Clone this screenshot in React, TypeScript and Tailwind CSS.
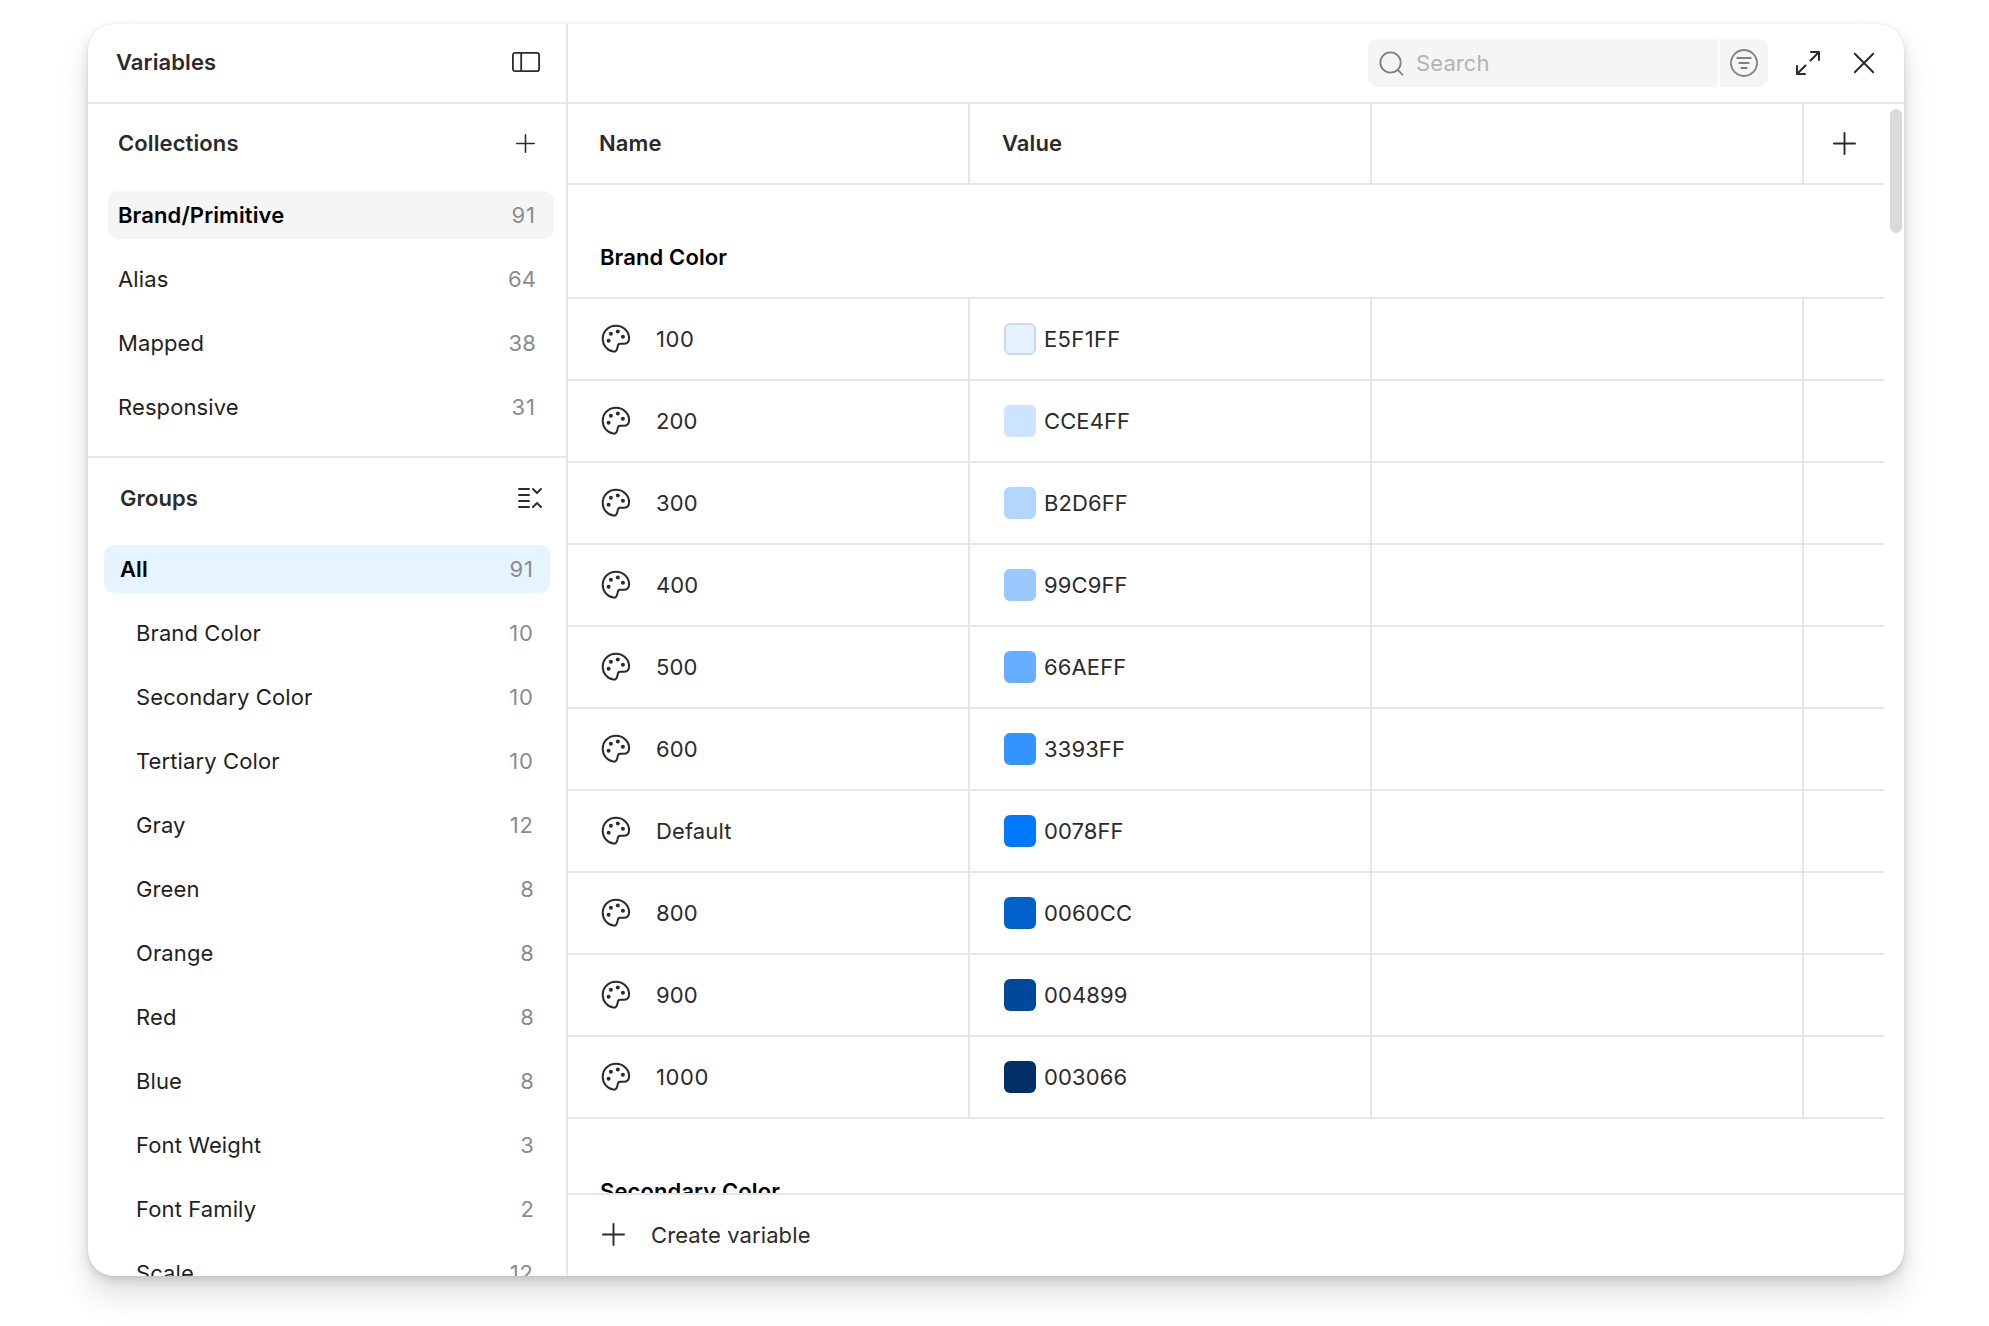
import { useState } from 'react';

interface CountItem {
    label: string;
    count: number;
}

interface ColorVariable {
    name: string;
    hex: string;
}

const collections: CountItem[] = [
    { label: 'Brand/Primitive', count: 91 },
    { label: 'Alias', count: 64 },
    { label: 'Mapped', count: 38 },
    { label: 'Responsive', count: 31 },
];

const groups: CountItem[] = [
    { label: 'All', count: 91 },
    { label: 'Brand Color', count: 10 },
    { label: 'Secondary Color', count: 10 },
    { label: 'Tertiary Color', count: 10 },
    { label: 'Gray', count: 12 },
    { label: 'Green', count: 8 },
    { label: 'Orange', count: 8 },
    { label: 'Red', count: 8 },
    { label: 'Blue', count: 8 },
    { label: 'Font Weight', count: 3 },
    { label: 'Font Family', count: 2 },
    { label: 'Scale', count: 12 },
];

const brandColors: ColorVariable[] = [
    { name: '100', hex: 'E5F1FF' },
    { name: '200', hex: 'CCE4FF' },
    { name: '300', hex: 'B2D6FF' },
    { name: '400', hex: '99C9FF' },
    { name: '500', hex: '66AEFF' },
    { name: '600', hex: '3393FF' },
    { name: 'Default', hex: '0078FF' },
    { name: '800', hex: '0060CC' },
    { name: '900', hex: '004899' },
    { name: '1000', hex: '003066' },
];

function PlusIcon({ size }: { size: number }) {
    return (
        <svg width={size} height={size} viewBox="0 0 24 24" fill="none" stroke="currentColor" strokeWidth="2" strokeLinecap="round">
            <path d="M12 1v22M1 12h22" />
        </svg>
    );
}

function SidebarIcon() {
    return (
        <svg width="28" height="20" viewBox="0 0 28 20" fill="none" stroke="currentColor" strokeWidth="1.8">
            <rect x="0.9" y="0.9" width="26.2" height="18.2" rx="2.2" />
            <path d="M9.2 1v18" />
        </svg>
    );
}

function CollapseIcon() {
    return (
        <svg width="24" height="22" viewBox="0 0 24 22" fill="none" stroke="currentColor" strokeWidth="1.9" strokeLinecap="round" strokeLinejoin="round">
            <path d="M1 2h10M1 8h10M1 14h10M1 20h10" />
            <path d="M15 2l4 4 4-4M15 20l4-4 4 4" />
        </svg>
    );
}

function PaletteIcon() {
    return (
        <svg width="30" height="30" viewBox="0 0 30 30" fill="none" stroke="currentColor" strokeWidth="2" strokeLinejoin="round">
            <path d="M12.5 27.6C5.8 26.4 1.7 21 1.7 14.8 1.7 7.4 7.6 1.8 15 1.8c7.4 0 13.1 5.6 13.1 12.4 0 3.6-2.4 5.6-5.6 5.6h-3.3c-1.7 0-2.3 1-2.5 2.6-.5 3.4-1.6 5.6-4.2 5.2z" />
            <g fill="currentColor" stroke="none">
                <circle cx="7.6" cy="16.7" r="2" />
                <circle cx="9.9" cy="9.8" r="2" />
                <circle cx="16.8" cy="7.6" r="2" />
                <circle cx="21.9" cy="12.8" r="2" />
            </g>
        </svg>
    );
}

function SearchIcon() {
    return (
        <svg width="25" height="25" viewBox="0 0 25 25" fill="none" stroke="currentColor" strokeWidth="1.8" strokeLinecap="round">
            <circle cx="11.5" cy="11.5" r="10.2" />
            <path d="M18.8 18.8l4.7 4.9" />
        </svg>
    );
}

function FilterIcon() {
    return (
        <svg width="28" height="28" viewBox="0 0 28 28" fill="none" stroke="currentColor" strokeWidth="1.8" strokeLinecap="round">
            <circle cx="14" cy="14" r="13" />
            <path d="M7.2 9h13.6M9.2 14h9.6M11.2 19h5.6" />
        </svg>
    );
}

function ExpandIcon() {
    return (
        <svg width="26" height="26" viewBox="0 0 26 26" fill="none" stroke="currentColor" strokeWidth="2" strokeLinecap="round" strokeLinejoin="round">
            <path d="M16 2h8v8M24 2l-8.5 8.5" />
            <path d="M10 24H2v-8M2 24l8.5-8.5" />
        </svg>
    );
}

function CloseIcon() {
    return (
        <svg width="22" height="22" viewBox="0 0 22 22" fill="none" stroke="currentColor" strokeWidth="2" strokeLinecap="round">
            <path d="M1.8 1.8l18.4 18.4M20.2 1.8L1.8 20.2" />
        </svg>
    );
}

function Count({ value }: { value: number }) {
    return (
        <span className={`font-normal text-[#8c8c8c] ${String(value).includes('1') ? 'tracking-[1px]' : ''}`}>{value}</span>
    );
}

export default function App() {
    const [collection, setCollection] = useState('Brand/Primitive');
    const [group, setGroup] = useState('All');

    return (
        <div className="w-full h-[1326px] bg-white pt-6 pl-[88px] overflow-hidden font-['Inter',sans-serif] text-[22px] leading-8 tracking-[0.11px] text-[#2b2b2b]">
            <div className="flex w-[1816px] h-[1252px] bg-white rounded-[26px] overflow-hidden shadow-[0_20px_32px_rgba(0,0,0,0.12),0_4px_10px_rgba(0,0,0,0.15),0_0_1px_rgba(0,0,0,0.12)]">
                {/* Sidebar */}
                <aside className="w-[480px] shrink-0 border-r-2 border-[#e6e6e6]">
                    <div className="flex items-center justify-between h-20 border-b-2 border-[#e6e6e6] pl-7 pr-[26px] pb-0.5">
                        <h1 className="font-semibold">Variables</h1>
                        <SidebarIcon />
                    </div>

                    {/* Collections */}
                    <section className="h-[354px] border-b-2 border-[#e6e6e6]">
                        <div className="flex items-center justify-between h-20 pl-[30px] pr-[30px] pb-0.5">
                            <h2 className="font-semibold">Collections</h2>
                            <button className="pr-px"><PlusIcon size={19} /></button>
                        </div>
                        <div className="flex flex-col gap-4 pl-5 pr-3 pt-[7px]">
                            {collections.map(item => (
                                <button
                                    key={item.label}
                                    onClick={() => setCollection(item.label)}
                                    className={`flex items-center justify-between h-12 rounded-[10px] pl-2.5 pr-[18px] ${collection === item.label ? 'bg-[#f5f5f5] font-semibold text-black' : 'text-[#1f1f1f]'}`}
                                >
                                    <span>{item.label}</span>
                                    <Count value={item.count} />
                                </button>
                            ))}
                        </div>
                    </section>

                    {/* Groups */}
                    <section>
                        <div className="flex items-center justify-between h-[79px] pl-8 pr-6">
                            <h2 className="font-semibold">Groups</h2>
                            <button><CollapseIcon /></button>
                        </div>
                        <div className="flex flex-col gap-4 pl-4 pr-4 pt-2">
                            {groups.map((item, index) => (
                                <button
                                    key={item.label}
                                    onClick={() => setGroup(item.label)}
                                    className={`flex items-center justify-between h-12 shrink-0 rounded-[10px] pr-4 ${index === 0 ? 'pl-4' : 'pl-8'} ${group === item.label ? 'bg-[#e5f4ff] font-semibold text-black' : 'text-[#1f1f1f]'}`}
                                >
                                    <span>{item.label}</span>
                                    <Count value={item.count} />
                                </button>
                            ))}
                        </div>
                    </section>
                </aside>

                {/* Main */}
                <main className="flex flex-col flex-1 min-w-0">
                    <div className="flex items-center justify-end h-20 shrink-0 border-b-2 border-[#e6e6e6] pr-[29px]">
                        <div className="flex h-12 w-[400px] gap-0.5 rounded-[10px] overflow-hidden text-[#808080]">
                            <div className="flex items-center flex-1 gap-3 bg-[#f5f5f5] pl-[11px]">
                                <SearchIcon />
                                <span className="text-[#b3b3b3]">Search</span>
                            </div>
                            <button className="flex items-center justify-center w-12 bg-[#f5f5f5]"><FilterIcon /></button>
                        </div>
                        <button className="ml-[27px]"><ExpandIcon /></button>
                        <button className="ml-8"><CloseIcon /></button>
                    </div>

                    <div className="flex flex-1 min-h-0">
                        <div className="w-[1316px] shrink-0 overflow-hidden">
                            <div className="grid grid-cols-[402px_402px_432px_80px] h-[81px] border-b-2 border-[#e6e6e6] font-semibold">
                                <div className="flex items-center border-r-2 border-[#e6e6e6] pl-[31px] pb-px">Name</div>
                                <div className="flex items-center border-r-2 border-[#e6e6e6] pl-8 pb-px">Value</div>
                                <div className="border-r-2 border-[#e6e6e6]"></div>
                                <button className="flex items-center justify-center"><PlusIcon size={23} /></button>
                            </div>

                            <h3 className="h-[114px] border-b-2 border-[#e6e6e6] pt-14 pl-8 font-semibold text-black">Brand Color</h3>

                            {brandColors.map(color => (
                                <div key={color.name} className="grid grid-cols-[402px_402px_432px_80px] h-[82px] border-b-2 border-[#e6e6e6]">
                                    <div className="flex items-center gap-[25px] border-r-2 border-[#e6e6e6] pl-[33px]">
                                        <PaletteIcon />
                                        <span className={color.name.includes('1') ? 'tracking-[0.6px]' : ''}>{color.name}</span>
                                    </div>
                                    <div className="flex items-center gap-2 border-r-2 border-[#e6e6e6] pl-[34px]">
                                        <span
                                            className={`size-8 rounded-[6px] ${color.hex === 'E5F1FF' ? 'border-2 border-[#ced9e6]' : ''}`}
                                            style={{ backgroundColor: `#${color.hex}` }}
                                        ></span>
                                        <span className={color.hex.includes('1') ? 'tracking-[0.36px]' : ''}>{color.hex}</span>
                                    </div>
                                    <div className="border-r-2 border-[#e6e6e6]"></div>
                                </div>
                            ))}

                            <h3 className="pt-14 pl-8 font-semibold text-black">Secondary Color</h3>
                        </div>

                        {/* Scrollbar */}
                        <div className="pl-1.5 pt-[5px]">
                            <div className="w-3 h-[124px] rounded-full bg-[#d9d9d9]"></div>
                        </div>
                    </div>

                    <button className="flex items-center h-[83px] shrink-0 gap-[26px] border-t-2 border-[#e6e6e6] pl-[34px] pb-0.5">
                        <PlusIcon size={23} />
                        <span>Create variable</span>
                    </button>
                </main>
            </div>
        </div>
    );
}
